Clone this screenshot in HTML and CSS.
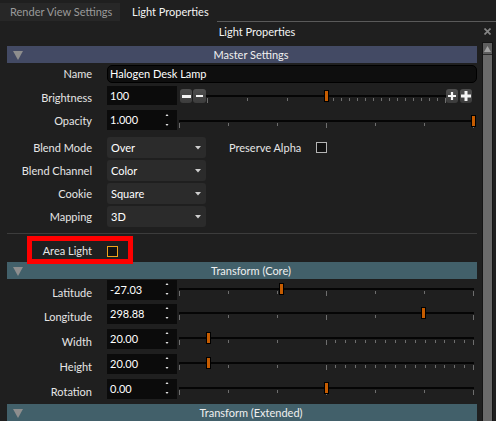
FILE: index.html
```html
<!DOCTYPE html>
<html>
<head>
<meta charset="utf-8">
<link rel="stylesheet" href="styles.css">
</head>
<body>
<div class="app">
  <div class="tabbar">
    <div class="tab tab-inactive">Render View Settings</div>
    <div class="tab tab-active">Light Properties</div>
    <div class="tabfill"></div>
  </div>
  <div class="titlebar">
    <div class="title">Light Properties</div>
    <svg class="close" width="7" height="7" viewBox="0 0 7 7"><path d="M0.5 0.5L6.5 6.5M6.5 0.5L0.5 6.5" stroke="#858585" stroke-width="1.7"/></svg>
  </div>
  <div class="main">
    <div class="content">
      <div class="section sec-master">
        <span class="tri"><svg width="10" height="9" viewBox="0 0 10 9"><polygon points="0,0 10,0 5,9" fill="#8e8e8e"/></svg></span>
        <span class="stitle">Master Settings</span>
      </div>

      <div class="row r-name">
        <div class="lbl">Name</div>
        <div class="namefield">Halogen Desk Lamp</div>
      </div>

      <div class="row r-bright">
        <div class="lbl lbl-2">Brightness</div>
        <div class="field"><span class="val">100</span></div>
        <div class="btn btn-1"><svg width="9" height="3"><rect x="0" y="0" width="9" height="3" fill="#f4f4f4"/></svg></div>
        <div class="btn btn-2"><svg width="7" height="2"><rect x="0" y="0" width="7" height="2" fill="#f4f4f4"/></svg></div>
        <svg class="slider-b" width="240" height="19" viewBox="0 0 240 19">
          <rect x="0" y="9" width="240" height="2" fill="#050505"/>
          <g fill="#6e6e6e">
            <rect x="1" y="12" width="1" height="5"/><rect x="41" y="12" width="1" height="3"/><rect x="81" y="12" width="1" height="3"/><rect x="121" y="12" width="1" height="3"/>
            <rect x="127" y="12" width="1" height="3"/><rect x="135" y="12" width="1" height="3"/><rect x="143" y="12" width="1" height="3"/><rect x="151" y="12" width="1" height="3"/><rect x="159" y="12" width="1" height="3"/><rect x="167" y="12" width="1" height="3"/><rect x="175" y="12" width="1" height="3"/><rect x="183" y="12" width="1" height="3"/><rect x="191" y="12" width="1" height="3"/><rect x="199" y="12" width="1" height="3"/><rect x="207" y="12" width="1" height="3"/><rect x="215" y="12" width="1" height="3"/><rect x="223" y="12" width="1" height="3"/><rect x="231" y="12" width="1" height="3"/><rect x="239" y="12" width="1" height="5"/>
          </g>
          <rect x="118.5" y="4.5" width="4" height="11" fill="#c65c00" stroke="#000"/>
        </svg>
        <div class="btn btn-3"><svg width="8" height="8"><path d="M0 4H8M4 0V8" stroke="#f4f4f4" stroke-width="2.2"/></svg></div>
        <div class="btn btn-4"><svg width="10" height="10"><path d="M0 5H10M5 0V10" stroke="#f4f4f4" stroke-width="3"/></svg></div>
      </div>

      <div class="row r-opacity">
        <div class="lbl lbl-1">Opacity</div>
        <div class="field"><span class="val">1.000</span>
          <svg class="spin" width="10" height="20" viewBox="0 0 10 20"><polygon points="3.5,6 6.5,6 5,4" fill="#e8e8e8"/><polygon points="3.5,14 6.5,14 5,16" fill="#e8e8e8"/></svg>
        </div>
        <svg class="slider" width="298" height="20" viewBox="0 0 298 20">
          <rect x="0" y="10" width="297" height="2" fill="#050505"/>
          <g fill="#6e6e6e">
            <rect x="0" y="13" width="1" height="5"/><rect x="49" y="13" width="1" height="3"/><rect x="98" y="13" width="1" height="3"/><rect x="147" y="13" width="1" height="5"/><rect x="196" y="13" width="1" height="3"/><rect x="245" y="13" width="1" height="3"/><rect x="294" y="13" width="1" height="5"/>
          </g>
          <rect x="292.5" y="5.5" width="4" height="11" fill="#c65c00" stroke="#000"/>
        </svg>
      </div>

      <div class="row r-dd r-dd-first">
        <div class="lbl">Blend Mode</div>
        <div class="dropdown"><span>Over</span><svg width="6" height="4"><polygon points="0,0 6,0 3,3.5" fill="#cfcfcf"/></svg></div>
        <div class="extra">Preserve Alpha</div>
        <div class="check"></div>
      </div>
      <div class="row r-dd">
        <div class="lbl">Blend Channel</div>
        <div class="dropdown"><span>Color</span><svg width="6" height="4"><polygon points="0,0 6,0 3,3.5" fill="#cfcfcf"/></svg></div>
      </div>
      <div class="row r-dd">
        <div class="lbl">Cookie</div>
        <div class="dropdown"><span>Square</span><svg width="6" height="4"><polygon points="0,0 6,0 3,3.5" fill="#cfcfcf"/></svg></div>
      </div>
      <div class="row r-dd">
        <div class="lbl">Mapping</div>
        <div class="dropdown"><span>3D</span><svg width="6" height="4"><polygon points="0,0 6,0 3,3.5" fill="#cfcfcf"/></svg></div>
      </div>

      <div class="separator"></div>

      <div class="row r-area">
        <div class="lbl">Area Light</div>
        <div class="check check-on"></div>
        <div class="annot"></div>
      </div>

      <div class="section sec-transform">
        <span class="tri"><svg width="10" height="9" viewBox="0 0 10 9"><polygon points="0,0 10,0 5,9" fill="#8e8e8e"/></svg></span>
        <span class="stitle">Transform (Core)</span>
      </div>

      <div class="row r-tf r-tf-first">
        <div class="lbl lbl-3">Latitude</div>
        <div class="field"><span class="val">-27.03</span>
          <svg class="spin" width="10" height="20" viewBox="0 0 10 20"><polygon points="3.5,5 6.5,5 5,3" fill="#e8e8e8"/><polygon points="3.5,13 6.5,13 5,15" fill="#e8e8e8"/></svg>
        </div>
        <svg class="slider" width="298" height="20" viewBox="0 0 298 20">
          <rect x="0" y="8" width="295" height="2" fill="#050505"/>
          <g fill="#6e6e6e"><rect x="0" y="11" width="1" height="5"/><rect x="49" y="11" width="1" height="3"/><rect x="98" y="11" width="1" height="3"/><rect x="147" y="11" width="1" height="5"/><rect x="196" y="11" width="1" height="3"/><rect x="245" y="11" width="1" height="3"/><rect x="294" y="11" width="1" height="5"/></g>
          <rect x="100.5" y="3.5" width="4" height="11" fill="#c65c00" stroke="#000"/>
        </svg>
      </div>

      <div class="row r-tf r-tf-second">
        <div class="lbl lbl-3">Longitude</div>
        <div class="field"><span class="val">298.88</span>
          <svg class="spin" width="10" height="20" viewBox="0 0 10 20"><polygon points="3.5,5 6.5,5 5,3" fill="#e8e8e8"/><polygon points="3.5,13 6.5,13 5,15" fill="#e8e8e8"/></svg>
        </div>
        <svg class="slider" width="298" height="20" viewBox="0 0 298 20">
          <rect x="0" y="8" width="295" height="2" fill="#050505"/>
          <g fill="#6e6e6e"><rect x="0" y="11" width="1" height="5"/><rect x="49" y="11" width="1" height="3"/><rect x="98" y="11" width="1" height="3"/><rect x="147" y="11" width="1" height="5"/><rect x="196" y="11" width="1" height="3"/><rect x="245" y="11" width="1" height="3"/><rect x="294" y="11" width="1" height="5"/></g>
          <rect x="242.5" y="3.5" width="4" height="11" fill="#c65c00" stroke="#000"/>
        </svg>
      </div>

      <div class="row r-tf">
        <div class="lbl lbl-3">Width</div>
        <div class="field"><span class="val">20.00</span>
          <svg class="spin" width="10" height="20" viewBox="0 0 10 20"><polygon points="3.5,5 6.5,5 5,3" fill="#e8e8e8"/><polygon points="3.5,13 6.5,13 5,15" fill="#e8e8e8"/></svg>
        </div>
        <svg class="slider" width="298" height="20" viewBox="0 0 298 20">
          <rect x="0" y="8" width="295" height="2" fill="#050505"/>
          <g fill="#6e6e6e"><rect x="0" y="11" width="1" height="5"/><rect x="49" y="11" width="1" height="3"/><rect x="98" y="11" width="1" height="3"/><rect x="147" y="11" width="1" height="5"/>
            <rect x="156" y="11" width="1" height="3"/><rect x="166" y="11" width="1" height="3"/><rect x="176" y="11" width="1" height="3"/><rect x="186" y="11" width="1" height="3"/><rect x="196" y="11" width="1" height="3"/><rect x="206" y="11" width="1" height="3"/><rect x="216" y="11" width="1" height="3"/><rect x="226" y="11" width="1" height="3"/><rect x="236" y="11" width="1" height="3"/><rect x="246" y="11" width="1" height="3"/><rect x="256" y="11" width="1" height="3"/><rect x="265" y="11" width="1" height="3"/><rect x="275" y="11" width="1" height="3"/><rect x="285" y="11" width="1" height="3"/><rect x="294" y="11" width="1" height="5"/></g>
          <rect x="27.5" y="3.5" width="4" height="11" fill="#c65c00" stroke="#000"/>
        </svg>
      </div>

      <div class="row r-tf">
        <div class="lbl lbl-3">Height</div>
        <div class="field"><span class="val">20.00</span>
          <svg class="spin" width="10" height="20" viewBox="0 0 10 20"><polygon points="3.5,5 6.5,5 5,3" fill="#e8e8e8"/><polygon points="3.5,13 6.5,13 5,15" fill="#e8e8e8"/></svg>
        </div>
        <svg class="slider" width="298" height="20" viewBox="0 0 298 20">
          <rect x="0" y="8" width="295" height="2" fill="#050505"/>
          <g fill="#6e6e6e"><rect x="0" y="11" width="1" height="5"/><rect x="49" y="11" width="1" height="3"/><rect x="98" y="11" width="1" height="3"/><rect x="147" y="11" width="1" height="5"/>
            <rect x="156" y="11" width="1" height="3"/><rect x="166" y="11" width="1" height="3"/><rect x="176" y="11" width="1" height="3"/><rect x="186" y="11" width="1" height="3"/><rect x="196" y="11" width="1" height="3"/><rect x="206" y="11" width="1" height="3"/><rect x="216" y="11" width="1" height="3"/><rect x="226" y="11" width="1" height="3"/><rect x="236" y="11" width="1" height="3"/><rect x="246" y="11" width="1" height="3"/><rect x="256" y="11" width="1" height="3"/><rect x="265" y="11" width="1" height="3"/><rect x="275" y="11" width="1" height="3"/><rect x="285" y="11" width="1" height="3"/><rect x="294" y="11" width="1" height="5"/></g>
          <rect x="27.5" y="3.5" width="4" height="11" fill="#c65c00" stroke="#000"/>
        </svg>
      </div>

      <div class="row r-tf">
        <div class="lbl lbl-3">Rotation</div>
        <div class="field"><span class="val">0.00</span>
          <svg class="spin" width="10" height="20" viewBox="0 0 10 20"><polygon points="3.5,5 6.5,5 5,3" fill="#e8e8e8"/><polygon points="3.5,13 6.5,13 5,15" fill="#e8e8e8"/></svg>
        </div>
        <svg class="slider" width="298" height="20" viewBox="0 0 298 20">
          <rect x="0" y="8" width="295" height="2" fill="#050505"/>
          <g fill="#6e6e6e"><rect x="0" y="11" width="1" height="5"/><rect x="49" y="11" width="1" height="3"/><rect x="98" y="11" width="1" height="3"/><rect x="147" y="11" width="1" height="5"/><rect x="196" y="11" width="1" height="3"/><rect x="245" y="11" width="1" height="3"/><rect x="294" y="11" width="1" height="5"/></g>
          <rect x="145.5" y="3.5" width="4" height="11" fill="#c65c00" stroke="#000"/>
        </svg>
      </div>

      <div class="section sec-transform sec-ext">
        <span class="tri"><svg width="10" height="9" viewBox="0 0 10 9"><polygon points="0,0 10,0 5,9" fill="#8e8e8e"/></svg></span>
        <span class="stitle">Transform (Extended)</span>
      </div>
    </div>
    <div class="scrollbar">
      <div class="sb-btn"><svg width="7" height="6" viewBox="0 0 7 6"><polygon points="0,6 7,6 3.5,0" fill="#a2a2a2"/></svg></div>
    </div>
  </div>
</div>
</body>
</html>
```
FILE: styles.css
```css
html, body {
  margin: 0;
  padding: 0;
  background: #1f1f1f;
}

.app {
  width: 496px;
  height: 421px;
  overflow: hidden;
  background: #1f1f1f;
  font-family: Lato, "Liberation Sans", sans-serif;
  font-size: 11px;
  color: #e8e8e8;
}

/* tabs */
.tabbar {
  display: flex;
  height: 22px;
}
.tab {
  box-sizing: border-box;
  margin-top: 3px;
  height: 18px;
  line-height: 18px;
  white-space: nowrap;
}
.tab-inactive {
  width: 120px;
  padding-left: 10px;
  background: #272727;
  color: #9a9a9a;
}
.tab-active {
  width: 97px;
  padding-left: 12px;
  color: #f4f4f4;
}
.tabfill {
  flex: 1;
  box-sizing: border-box;
  height: 22px;
  border-bottom: 1px solid #5a5a5a;
}

/* title */
.titlebar {
  display: flex;
  align-items: center;
  height: 20px;
}
.title {
  flex: 1;
  text-align: center;
  padding-left: 30px;
  line-height: 20px;
  color: #f4f4f4;
}
.close {
  margin-right: 5px;
  margin-left: 0;
  margin-top: -1px;
}

/* main */
.main {
  display: flex;
  height: 379px;
}
.content {
  margin-left: 7px;
  width: 470px;
  padding-top: 4px;
}
.scrollbar {
  margin-left: 5px;
  width: 11px;
  box-sizing: border-box;
  border: 1px solid #141414;
  border-bottom: none;
  background: #6a6a6a;
}
.sb-btn {
  height: 11px;
  border-bottom: 1px solid #2a2a2a;
  background: #5e5e5e;
  display: flex;
  justify-content: center;
  align-items: center;
}

/* section headers */
.section {
  display: flex;
  align-items: center;
  height: 17px;
  color: #f0f0f0;
}
.sec-master { background: #434a64; }
.sec-transform { background: #42606a; margin-top: 2px; }
.sec-ext { margin-top: 5px; }
.tri {
  width: 18px;
  display: flex;
  padding-left: 6px;
  box-sizing: border-box;
  margin-top: 1px;
}
.stitle {
  flex: 1;
  text-align: center;
  line-height: 17px;
}

/* rows */
.row {
  display: flex;
  align-items: flex-start;
  position: relative;
}
.lbl {
  flex: none;
  width: 85px;
  margin-right: 15px;
  text-align: right;
  white-space: nowrap;
  color: #e6e6e6;
}
.lbl-1 { padding-top: 1px; }
.lbl-2 { padding-top: 2px; }
.lbl-3 { padding-top: 3px; }

.r-name { margin-top: 2px; height: 18px; line-height: 18px; }
.namefield {
  width: 370px;
  height: 18px;
  box-sizing: border-box;
  border: 1px solid #000;
  border-radius: 5px;
  background: #0e0e0e;
  padding-left: 2px;
  line-height: 16px;
  color: #fff;
}

.r-bright { margin-top: 3px; height: 19px; line-height: 19px; }
.r-opacity { margin-top: 5px; height: 20px; line-height: 20px; }

.field {
  flex: none;
  display: flex;
  width: 70px;
  height: 100%;
  background: #0b0b0b;
  box-sizing: border-box;
  padding-left: 3px;
  color: #fff;
}
.val { flex: 1; }
.spin { margin-right: 5px; }

.btn {
  flex: none;
  height: 14px;
  margin-top: 3px;
  box-sizing: border-box;
  border-radius: 3px;
  background: linear-gradient(#4e4e4e, #3c3c3c);
  display: flex;
  align-items: center;
  justify-content: center;
}
.btn svg { display: block; }
.btn-1 { width: 12px; margin-left: 3px; }
.btn-2 { width: 13px; margin-left: 1px; }
.btn-3 { width: 12px; }
.btn-4 { width: 12px; margin-left: 2px; }
.slider-b { flex: none; display: block; }
.slider { flex: none; display: block; margin-left: 2px; }

/* dropdowns */
.r-dd { margin-top: 2px; height: 21px; line-height: 21px; }
.r-dd-first { margin-top: 7px; }
.dropdown {
  width: 99px;
  height: 21px;
  box-sizing: border-box;
  border-radius: 3px;
  background: #2b2b2b;
  padding: 0 5px 0 4px;
  display: flex;
  align-items: center;
  justify-content: space-between;
  color: #fff;
}
.extra {
  margin-left: 23px;
  color: #e6e6e6;
}
.check {
  width: 11px;
  height: 11px;
  box-sizing: border-box;
  border: 1px solid #b4b4b4;
  background: #111;
  margin-left: 15px;
  margin-top: 5px;
}

.separator {
  margin-top: 6px;
  height: 1px;
  background: #3c3c3c;
}

.r-area { margin-top: 8px; height: 18px; line-height: 18px; }
.check-on {
  margin-left: 0;
  margin-top: 4px;
  border-color: #f0a21c;
  background: #121212;
}
.annot {
  position: absolute;
  left: 20px;
  top: -6px;
  width: 106px;
  height: 28px;
  box-sizing: border-box;
  border: 5px solid #ff0000;
}

/* transform rows */
.r-tf { margin-top: 5px; height: 20px; line-height: 20px; }
.r-tf-first { margin-top: 1px; }
.r-tf-second { margin-top: 4px; }
```
